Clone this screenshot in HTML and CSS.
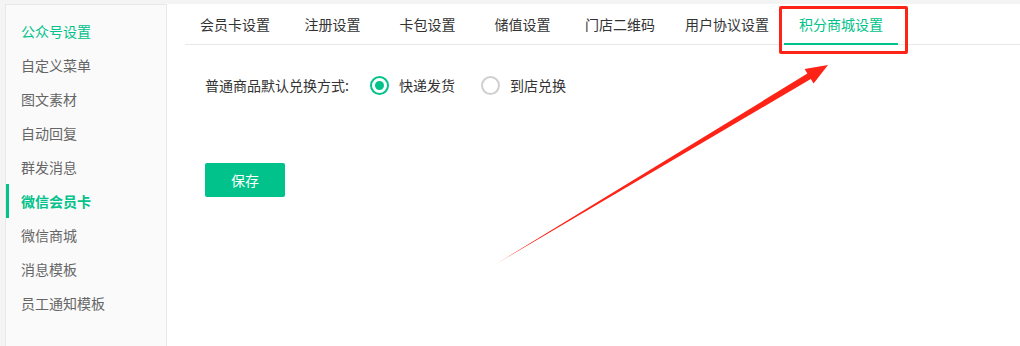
FILE: index.html
```html
<!DOCTYPE html>
<html lang="zh">
<head>
<meta charset="utf-8">
<link rel="stylesheet" href="styles.css">
</head>
<body>
<div class="page">
  <aside class="sidebar">
    <div class="nav-item group">公众号设置</div>
    <div class="nav-item">自定义菜单</div>
    <div class="nav-item">图文素材</div>
    <div class="nav-item">自动回复</div>
    <div class="nav-item">群发消息</div>
    <div class="nav-item active">微信会员卡</div>
    <div class="nav-item">微信商城</div>
    <div class="nav-item">消息模板</div>
    <div class="nav-item">员工通知模板</div>
  </aside>
  <main class="main">
    <nav class="tabs">
      <div class="tab">会员卡设置</div>
      <div class="tab">注册设置</div>
      <div class="tab">卡包设置</div>
      <div class="tab">储值设置</div>
      <div class="tab">门店二维码</div>
      <div class="tab">用户协议设置</div>
      <div class="tab current">积分商城设置</div>
    </nav>
    <div class="content">
      <div class="form-row">
        <span class="label">普通商品默认兑换方式:</span>
        <label class="radio checked"><span class="dot"></span>快递发货</label>
        <label class="radio"><span class="dot"></span>到店兑换</label>
      </div>
      <button class="save">保存</button>
    </div>
  </main>
</div>
<div class="highlight"></div>
<svg class="arrow" width="1020" height="346" viewBox="0 0 1020 346">
  <polygon points="496,264 810.8,79 813.6,83.6 828,65 804.6,69 807.4,73.6" fill="#fd2417"/>
</svg>
</body>
</html>
```
FILE: styles.css
```css
* { box-sizing: border-box; }
html, body { margin: 0; padding: 0; }
body {
  background: #f4f4f4;
  font-family: "Noto Sans CJK SC", "Liberation Sans", sans-serif;
  font-size: 14px;
  width: 1020px;
  height: 346px;
  overflow: hidden;
  position: relative;
}
.page {
  display: flex;
  padding: 4px 0 0 5px;
  height: 346px;
}
.sidebar {
  width: 162px;
  flex: none;
  background: #fafafa;
  border: 1px solid #e8e8e8;
  border-bottom: none;
  padding-top: 9px;
}
.nav-item {
  height: 34px;
  line-height: 34px;
  padding-left: 12px;
  color: #666;
  border-left: 3px solid transparent;
}
.nav-item.group { color: #00c28a; }
.nav-item.active {
  color: #00c28a;
  font-weight: bold;
  border-left-color: #00c28a;
}
.main {
  flex: 1;
  background: #fff;
  padding-left: 18px;
}
.tabs {
  display: flex;
  height: 41px;
  border-bottom: 1px solid #e8e8e8;
}
.tab {
  min-width: 95px;
  padding: 0 15px;
  height: 41px;
  line-height: 40px;
  text-align: center;
  color: #333;
  border-bottom: 2px solid transparent;
  margin-bottom: -1px;
}
.tab.current {
  color: #00c28a;
  border-bottom-color: #00c28a;
}
.content {
  padding: 27px 0 0 20px;
}
.form-row {
  display: flex;
  align-items: center;
  height: 26px;
  color: #333;
}
.label { margin-right: 21px; }
.radio {
  display: flex;
  align-items: center;
  margin-right: 26px;
}
.dot {
  width: 19px;
  height: 19px;
  border-radius: 50%;
  border: 2px solid #cfcfcf;
  margin-right: 10px;
  display: flex;
  align-items: center;
  justify-content: center;
}
.radio.checked .dot { border-color: #00c28a; }
.radio.checked .dot::after {
  content: "";
  width: 9px;
  height: 9px;
  border-radius: 50%;
  background: #00c28a;
}
.save {
  display: block;
  margin-top: 65px;
  width: 80px;
  height: 34px;
  border: none;
  border-radius: 2px;
  background: #00c28a;
  color: #fff;
  font-family: inherit;
  font-size: 14px;
}
.highlight {
  position: absolute;
  left: 779px;
  top: 6px;
  width: 129px;
  height: 48px;
  border: 3px solid #fd2417;
  border-radius: 2px;
}
.arrow {
  position: absolute;
  left: 0;
  top: 0;
}
```
